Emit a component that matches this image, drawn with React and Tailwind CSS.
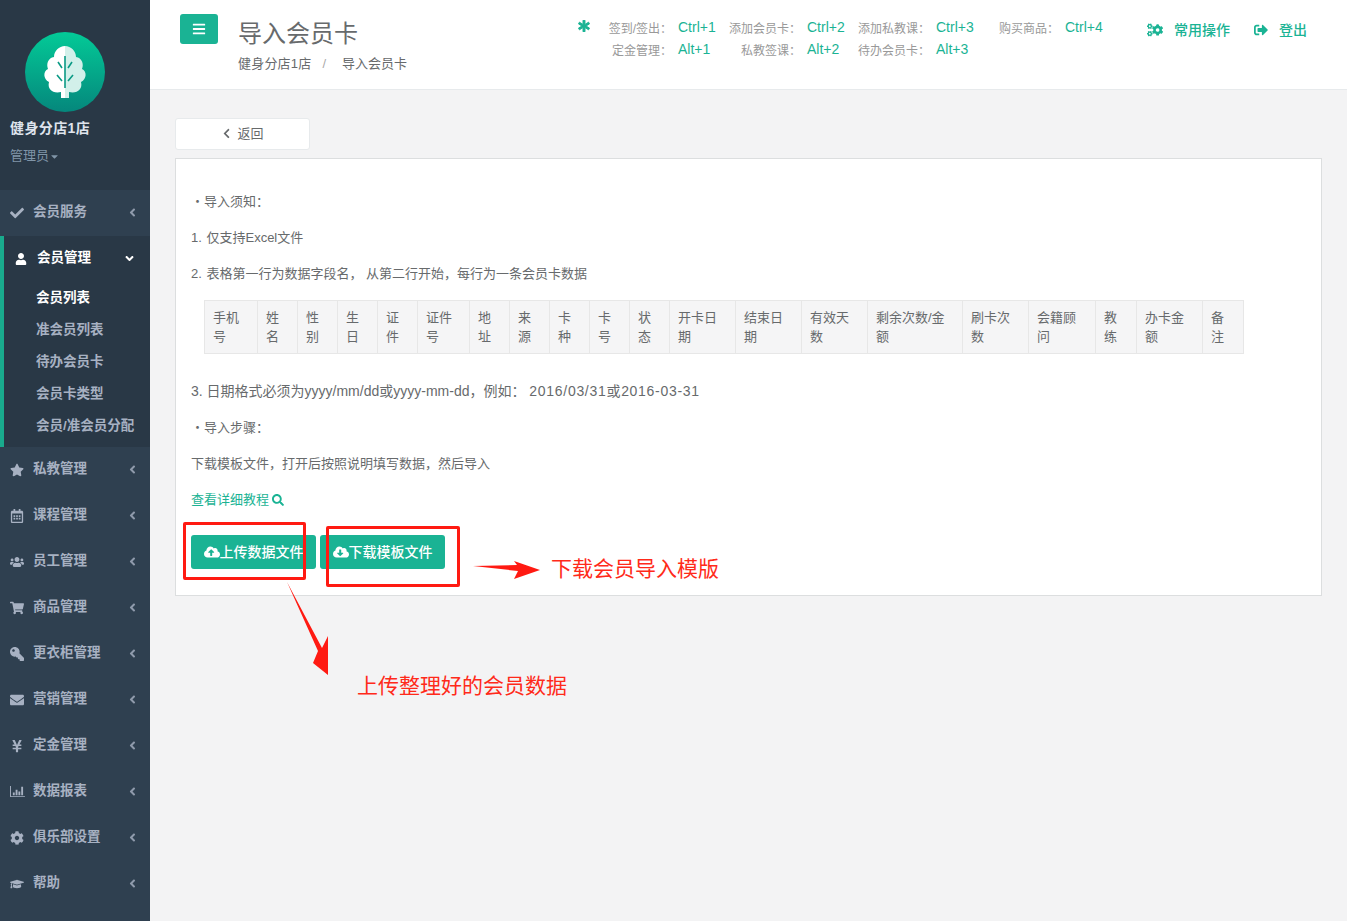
import React from 'react';
import {
  FaCheck, FaUser, FaStar, FaRegCalendarAlt, FaUsers, FaShoppingCart, FaKey, FaEnvelope, FaYenSign,
  FaCog, FaGraduationCap, FaAngleLeft, FaAngleDown, FaCogs, FaBars, FaSearch,
  FaCloudUploadAlt, FaCloudDownloadAlt, FaAsterisk, FaChevronLeft, FaCaretDown, FaSignOutAlt,
} from 'react-icons/fa';

function BarChartIcon({ className }) {
  return (
    <svg viewBox="0 0 16 14" width="15" height="13" className={className} fill="currentColor">
      <path d="M0 1h1v11h15v1H0z" />
      <path d="M3 8h2v3H3zM6 5h2v6H6zM9 7h2v4H9zM12 2h2v9h-2z" />
    </svg>
  );
}

function KeyIcon({ className }) {
  return <FaKey className={`-scale-x-100 ${className}`} />;
}

const topItems = [
  [FaStar, '私教管理'],
  [FaRegCalendarAlt, '课程管理'],
  [FaUsers, '员工管理'],
  [FaShoppingCart, '商品管理'],
  [KeyIcon, '更衣柜管理'],
  [FaEnvelope, '营销管理'],
  [FaYenSign, '定金管理'],
  [BarChartIcon, '数据报表'],
  [FaCog, '俱乐部设置'],
  [FaGraduationCap, '帮助'],
];

const subItems = ['会员列表', '准会员列表', '待办会员卡', '会员卡类型', '会员/准会员分配'];

const shortcuts = [
  ['签到/签出：', 'Ctrl+1'], ['添加会员卡：', 'Ctrl+2'], ['添加私教课：', 'Ctrl+3'], ['购买商品：', 'Ctrl+4'],
  ['定金管理：', 'Alt+1'], ['私教签课：', 'Alt+2'], ['待办会员卡：', 'Alt+3'],
];

const columns = [
  ['手机号', 'w-[53px]'], ['姓名', 'w-[40px]'], ['性别', 'w-[40px]'], ['生日', 'w-[40px]'], ['证件', 'w-[40px]'],
  ['证件号', 'w-[52px]'], ['地址', 'w-[40px]'], ['来源', 'w-[40px]'], ['卡种', 'w-[40px]'], ['卡号', 'w-[40px]'],
  ['状态', 'w-[40px]'], ['开卡日期', 'w-[66px]'], ['结束日期', 'w-[66px]'], ['有效天数', 'w-[66px]'],
  ['剩余次数/金额', 'w-[95px]'], ['刷卡次数', 'w-[66px]'], ['会籍顾问', 'w-[67px]'], ['教练', 'w-[41px]'],
  ['办卡金额', 'w-[66px]'], ['备注', 'w-[41px]'],
];

function Logo() {
  return (
    <svg width="80" height="80" viewBox="0 0 80 80" className="block">
      <defs>
        <linearGradient id="logoBg" x1="0" y1="0" x2="0" y2="1">
          <stop offset="0" stopColor="#03ca97" />
          <stop offset="1" stopColor="#05877c" />
        </linearGradient>
      </defs>
      <circle cx="40" cy="40" r="40" fill="url(#logoBg)" />
      <path d="M36 66 L36 60 C28 62 22 57 24 50 C18 47 18 39 23 37 C21 32 23 26 29 25 C29 19 34 14 40 14 L40 66 Z" fill="#ffffff" />
      <path d="M44 66 L44 60 C52 62 58 57 56 50 C62 47 62 39 57 37 C59 32 57 26 51 25 C51 19 46 14 40 14 L40 66 Z" fill="#d2f0ea" />
      <path d="M40 24 V56 M33 30 L37 36 M47 30 L43 36 M32 43 L37 49 M48 43 L43 49" stroke="#0a9a85" strokeWidth="1.6" fill="none" />
    </svg>
  );
}

function NavItem({ Icon, label }) {
  return (
    <div className="flex h-[46px] items-center pb-[1px] pl-[10px] pr-[11px] text-[13.5px] font-bold text-[#a7b1c2]">
      <span className="flex w-[23px] shrink-0 items-center"><Icon className="text-[14px]" /></span>
      <span className="flex-1 whitespace-nowrap">{label}</span>
      <FaAngleLeft className="text-[13px] opacity-80" />
    </div>
  );
}

function Sidebar() {
  return (
    <aside className="flex w-[150px] shrink-0 flex-col bg-[#2f4050]">
      <div className="h-[190px] bg-[#293846] pl-[10px] pt-[32px]">
        <div className="ml-[15px]"><Logo /></div>
        <div className="mt-[6px] text-[14px] font-bold leading-[20px] tracking-[0.4px] text-[#dfe4ed]">健身分店1店</div>
        <div className="mt-[8px] flex items-center text-[13px] leading-[20px] text-[#8095a8]">
          管理员<FaCaretDown className="text-[11px]" />
        </div>
      </div>
      <NavItem Icon={FaCheck} label="会员服务" />
      <div className="border-l-4 border-[#19aa8d] bg-[#293846] pb-[5px]">
        <div className="flex h-[46px] items-center pb-[1px] pl-[11px] pr-[14px] text-[13.5px] font-bold text-white">
          <span className="flex w-[22px] shrink-0 items-center"><FaUser className="text-[12px]" /></span>
          <span className="flex-1">会员管理</span>
          <FaAngleDown className="text-[13px]" />
        </div>
        <ul>
          {subItems.map((s, i) => (
            <li key={s} className={`flex h-[32px] items-center whitespace-nowrap pl-[32px] text-[13.5px] font-bold ${i === 0 ? 'text-white' : 'text-[#a7b1c2]'}`}>{s}</li>
          ))}
        </ul>
      </div>
      {topItems.map(([Icon, label]) => <NavItem key={label} Icon={Icon} label={label} />)}
    </aside>
  );
}

function Header() {
  return (
    <header className="flex h-[90px] items-start border-b border-[#e7eaec] bg-white pr-[40px]">
      <button className="ml-[30px] mt-[14px] flex h-[30px] w-[38px] items-center justify-center rounded-[3px] bg-[#1ab394] text-white">
        <FaBars className="text-[14px]" />
      </button>
      <div className="ml-[20px] mt-[16px] w-[300px] text-[#676a6c]">
        <h2 className="text-[24px] leading-[36px]">导入会员卡</h2>
        <div className="mt-[2px] flex text-[13px] leading-[20px]">
          <span className="tracking-[0.2px]">健身分店1店</span>
          <span className="ml-[11px] text-[#aaa]">/</span>
          <span className="ml-[16px]">导入会员卡</span>
        </div>
      </div>
      <FaAsterisk stroke="currentColor" strokeWidth={40} className="ml-[40px] mt-[20px] text-[12px] text-[#1ab394]" />
      <div className="ml-[4px] mt-[17px] grid w-[516px] grid-cols-4 gap-y-[2px]">
        {shortcuts.map(([k, v]) => (
          <div key={k} className="flex h-[20px] items-center whitespace-nowrap">
            <span className="mt-[3px] w-[78px] text-right text-[12px] text-[#999]">{k}</span>
            <span className="ml-[6px] text-[14px] text-[#1ab394]">{v}</span>
          </div>
        ))}
      </div>
      <div className="ml-auto mt-[20px] flex items-center text-[14px] font-medium leading-[20px] text-[#1ab394]">
        <FaCogs className="-scale-x-100 text-[16px]" />
        <span className="ml-[11px]">常用操作</span>
        <FaSignOutAlt className="ml-[24px] text-[14px]" />
        <span className="ml-[11px]">登出</span>
      </div>
    </header>
  );
}

function Annotations() {
  return (
    <>
      <div className="absolute left-[183px] top-[522px] h-[58px] w-[123px] rounded-[2px] border-[3px] border-[#ff1a12]" />
      <div className="absolute left-[326px] top-[526px] h-[61px] w-[134px] rounded-[2px] border-[3px] border-[#ff1a12]" />
      <svg className="absolute left-[280px] top-[555px]" width="270" height="125" viewBox="280 555 270 125">
        <polygon points="473,566 517,565 514,561 540,570 514,579 518,571" fill="#ff1a12" />
        <polygon points="287,582 318,651 313,663 328,675 328,636 322,648" fill="#ff1a12" />
      </svg>
      <div className="absolute left-[551px] top-[554px] text-[21px] leading-[30px] text-[#ff2a1a]">下载会员导入模版</div>
      <div className="absolute left-[357px] top-[671px] text-[21px] leading-[30px] text-[#ff2a1a]">上传整理好的会员数据</div>
    </>
  );
}

export default function App() {
  return (
    <div className="relative flex h-[921px] overflow-hidden bg-[#f3f3f4] font-['Liberation_Sans','Noto_Sans_CJK_SC',sans-serif] text-[#676a6c]">
      <Sidebar />
      <main className="min-w-0 flex-1">
        <Header />
        <div className="px-[25px] pt-[28px]">
          <button className="flex h-[32px] w-[135px] items-center justify-center rounded-[3px] border border-[#e7eaec] bg-white pb-[1px] text-[13px]">
            <FaChevronLeft className="mr-[5px] text-[11px]" />返回
          </button>
          <section className="mt-[8px] h-[438px] border border-[#dcdedf] bg-white px-[15px] pt-[33px] text-[13px] leading-[20px]">
            <p>・导入须知：</p>
            <p className="mt-[16px]"><span className="mr-[1px]">1.</span> 仅支持Excel文件</p>
            <p className="mt-[16px]"><span className="mr-[1px]">2.</span> 表格第一行为数据字段名， 从第二行开始，每行为一条会员卡数据</p>
            <table className="ml-[13px] mt-[16px] table-fixed border-collapse">
              <thead>
                <tr>
                  {columns.map(([c, w], i) => (
                    <th key={i} className={`${w} border border-[#e7e7e7] bg-[#f5f5f6] px-[8px] pb-[7px] pt-[7px] text-left align-top text-[13px] font-normal leading-[19px]`}>{c}</th>
                  ))}
                </tr>
              </thead>
            </table>
            <p className="mt-[27px] text-[14px]">3. 日期格式必须为yyyy/mm/dd或yyyy-mm-dd，例如： <span className="tracking-[0.7px]">2016/03/31或2016-03-31</span></p>
            <p className="mt-[17px]">・导入步骤：</p>
            <p className="mt-[16px]">下载模板文件，打开后按照说明填写数据，然后导入</p>
            <p className="mt-[16px] flex items-center text-[#1ab394]">查看详细教程<FaSearch className="ml-[3px] text-[12px]" /></p>
            <div className="mt-[25px] flex gap-[4px]">
              <button className="flex h-[34px] w-[125px] items-center justify-center rounded-[3px] bg-[#1ab394] text-[14px] font-medium text-white">
                <FaCloudUploadAlt className="text-[16px]" />上传数据文件
              </button>
              <button className="flex h-[34px] w-[125px] items-center justify-center rounded-[3px] bg-[#1ab394] text-[14px] font-medium text-white">
                <FaCloudDownloadAlt className="text-[16px]" />下载模板文件
              </button>
            </div>
          </section>
        </div>
      </main>
      <Annotations />
    </div>
  );
}
